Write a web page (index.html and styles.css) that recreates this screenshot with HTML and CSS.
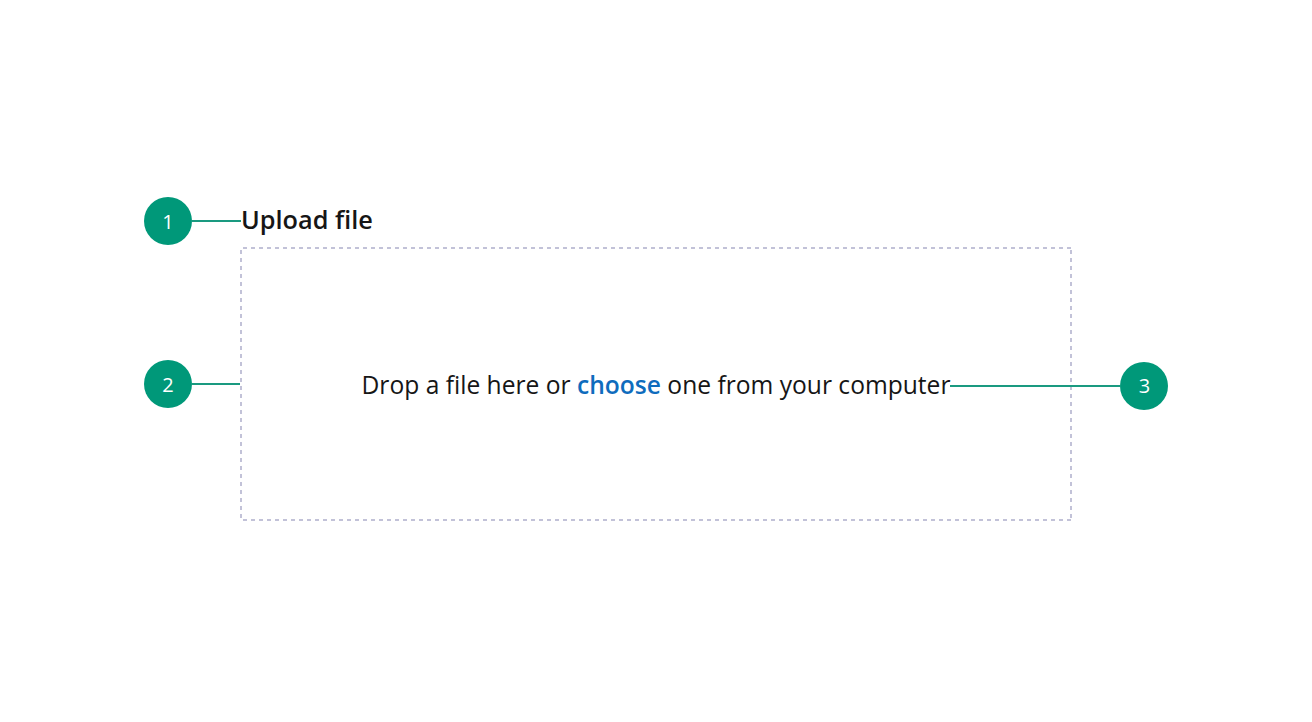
FILE: index.html
```html
<!DOCTYPE html>
<html lang="en">
<head>
<meta charset="utf-8">
<title>Upload file</title>
<link rel="stylesheet" href="styles.css">
</head>
<body>
<main class="stage">
  <section class="uploader">
    <h2 class="uploader-label">Upload file</h2>
    <div class="dropzone">
      <p class="dropzone-text">Drop a file here or <a class="choose" href="#">choose</a> one from your computer<span class="callout callout-3"><span class="callout-line"></span><span class="marker">3</span></span></p>
    </div>
    <div class="callout callout-1"><span class="marker">1</span><span class="callout-line"></span></div>
    <div class="callout callout-2"><span class="marker">2</span><span class="callout-line"></span></div>
  </section>
</main>
</body>
</html>
```
FILE: styles.css
```css
html, body {
  margin: 0;
  padding: 0;
  background: #ffffff;
}
body {
  font-family: "Open Sans", "Liberation Sans", sans-serif;
  color: #161616;
}
.stage {
  display: flex;
  justify-content: center;
  padding-top: 203px;
}
.uploader {
  position: relative;
  width: 832px;
  display: flex;
  flex-direction: column;
  gap: 12px;
}
.uploader-label {
  margin: 0;
  padding-left: 1px;
  font-size: 25.3px;
  line-height: 32px;
  font-weight: 600;
  color: #161616;
}
.dropzone {
  height: 274px;
  display: flex;
  align-items: center;
  justify-content: center;
  background-image:
    repeating-linear-gradient(90deg, transparent 0 3px, #c2c2d8 3px 7px, transparent 7px 8px),
    repeating-linear-gradient(90deg, transparent 0 3px, #c2c2d8 3px 7px, transparent 7px 8px),
    repeating-linear-gradient(180deg, transparent 0 3px, #c2c2d8 3px 7px, transparent 7px 8px),
    repeating-linear-gradient(180deg, transparent 0 3px, #c2c2d8 3px 7px, transparent 7px 8px);
  background-size: 100% 2px, 100% 2px, 2px 100%, 2px 100%;
  background-position: 0 0, 0 100%, 0 0, 100% 0;
  background-repeat: no-repeat;
}
.dropzone-text {
  position: relative;
  margin: 0;
  padding-top: 2px;
  font-size: 24.6px;
  line-height: 32px;
  color: #161616;
}
.choose {
  color: #0f6cbd;
  font-weight: 600;
  text-decoration: none;
}
.callout {
  position: absolute;
  display: flex;
  align-items: center;
  font-size: 20px;
}
.marker {
  width: 48px;
  height: 48px;
  border-radius: 50%;
  background: #009879;
  color: #ffffff;
  display: flex;
  align-items: center;
  justify-content: center;
  font-size: 20px;
  font-weight: 400;
  flex: none;
}
.callout-line {
  display: block;
  height: 2px;
  background: #1a9a80;
}
.callout-1 {
  left: -96px;
  top: -6px;
}
.callout-1 .callout-line {
  width: 49px;
}
.callout-2 {
  left: -96px;
  top: 157px;
}
.callout-2 .callout-line {
  width: 48px;
}
.callout-3 {
  left: 100%;
  top: -5px;
}
.callout-3 .callout-line {
  width: 170px;
}
```
